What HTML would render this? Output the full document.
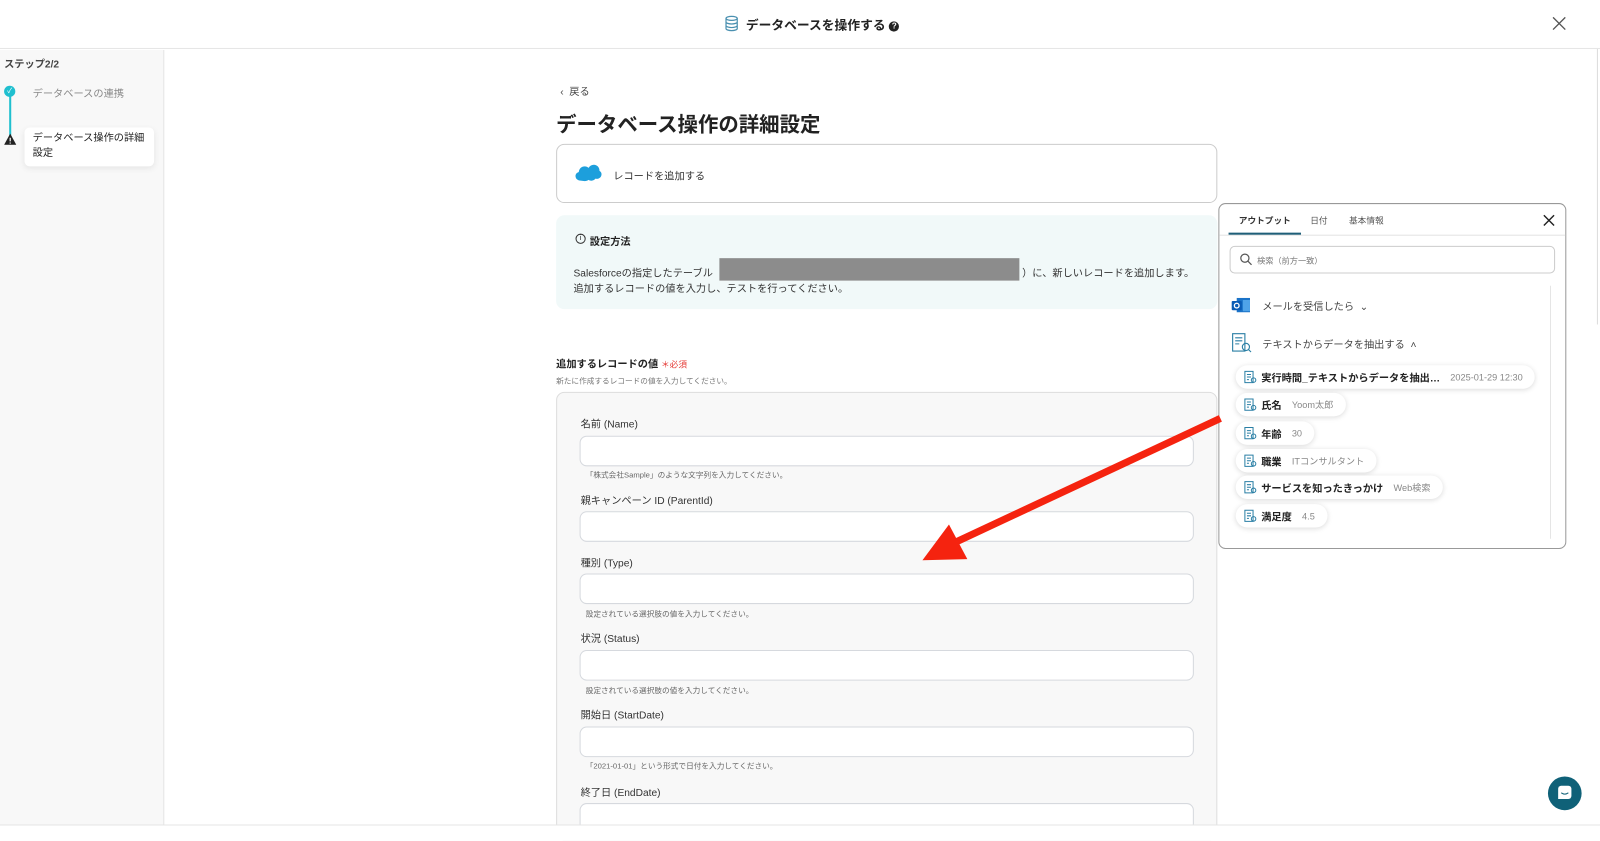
<!DOCTYPE html>
<html><head><meta charset="utf-8"><style>
*{box-sizing:border-box;margin:0;padding:0}
body{width:1600px;height:824px;overflow:hidden;background:#fff;font-family:"Liberation Sans","Noto Sans CJK JP",sans-serif;color:#222;position:relative}
#w{position:absolute;left:0;top:0;width:1568px;height:808px;transform:scale(1.0204);transform-origin:0 0}
.a{position:absolute;white-space:nowrap}
.inp{position:absolute;left:568px;width:602px;height:30px;background:#fff;border:1px solid #d6d9de;border-radius:7px}
.lab{position:absolute;left:569px;font-size:10px;color:#333}
.hlp{position:absolute;left:574px;font-size:7.5px;color:#666}
.chip{position:absolute;left:1211px;height:23px;background:#fff;border-radius:12px;box-shadow:0 1px 5px rgba(0,0,0,.15);font-size:10px;font-weight:bold;display:flex;align-items:center;padding:0 12px 0 8px;white-space:nowrap}
.chip i{font-style:normal;font-weight:normal;color:#888;font-size:9px;margin-left:10px}
.chip svg{margin-right:4px}
</style></head><body><div id="w">
<div class="a" style="left:0;top:0;width:1568px;height:48px;border-bottom:1px solid #e5e5e5"></div>
<svg class="a" style="left:710px;top:15px" width="14" height="16" viewBox="0 0 14 16"><g fill="none" stroke="#4a90b0" stroke-width="1.2"><ellipse cx="7" cy="3" rx="5.5" ry="2"/><path d="M1.5 3v10c0 1.1 2.5 2 5.5 2s5.5-.9 5.5-2V3M1.5 6.5c0 1.1 2.5 2 5.5 2s5.5-.9 5.5-2M1.5 10c0 1.1 2.5 2 5.5 2s5.5-.9 5.5-2"/></g></svg>
<div class="a" style="left:731px;top:14px;font-size:12.5px;font-weight:bold">データベースを操作する <span style="display:inline-block;width:10px;height:10px;border-radius:50%;background:#222;color:#fff;font-size:8px;text-align:center;line-height:10px;vertical-align:1px">?</span></div>
<svg class="a" style="left:1521px;top:16px" width="14" height="14"><path d="M1 1L13 13M13 1L1 13" stroke="#555" stroke-width="1.3"/></svg>
<div class="a" style="left:0;top:49px;width:161px;height:760px;background:#f8f8f8;border-right:1px solid #e5e5e5"></div>
<div class="a" style="left:4px;top:54px;font-size:10px;font-weight:bold;color:#444">ステップ2/2</div>
<div class="a" style="left:9px;top:90px;width:2px;height:46px;background:#1fbfcf"></div>
<div class="a" style="left:4px;top:84px;width:11px;height:11px;border-radius:50%;background:#1fbfcf;color:#fff;font-size:7px;text-align:center;line-height:11px">✓</div>
<div class="a" style="left:32px;top:83px;font-size:10px;color:#888">データベースの連携</div>
<svg class="a" style="left:4px;top:131px" width="12" height="11"><path d="M6 0L12 11H0Z" fill="#222"/><path d="M6 4v3.5M6 8.7v1" stroke="#fff" stroke-width="1.2"/></svg>
<div class="a" style="left:24px;top:125px;width:127px;height:38px;background:#fff;border-radius:5px;box-shadow:0 2px 6px rgba(0,0,0,.08)"></div>
<div class="a" style="left:32px;top:128px;font-size:10px;line-height:15px;color:#222">データベース操作の詳細<br>設定</div>
<div class="a" style="left:549px;top:81px;font-size:10px;color:#444">‹&nbsp; 戻る</div>
<div class="a" style="left:545px;top:106px;font-size:20px;font-weight:bold">データベース操作の詳細設定</div>
<div class="a" style="left:545px;top:141px;width:648px;height:58px;border:1px solid #ccc;border-radius:8px"></div>
<svg class="a" style="left:563px;top:160px" width="27" height="19"><path d="M6 17c-3 0-5-2-5-4.5 0-2 1.5-3.5 3.2-3.8C4.5 5 7 3 10 3c1.5 0 2.8.6 3.8 1.5C15 2.5 17 1.5 19 1.5c3 0 5.5 2.5 5.5 5.5v.5c1.300.6 2 1.8 2 3.3 0 2.5-2 4.5-4.5 4.5-.5 0-1 0-1.400-.2-1 1.3-2.5 2-4 2-1 0-2-.3-2.800-.8C12.900 17 11.500 17.500 10 17.500z" fill="#1d9fdc"/></svg>
<div class="a" style="left:601px;top:164px;font-size:10px;color:#333">レコードを追加する</div>
<div class="a" style="left:545px;top:211px;width:648px;height:92px;background:#f1f9f9;border-radius:8px"></div>
<div class="a" style="left:564px;top:229px;width:10px;height:10px;border:1px solid #333;border-radius:50%;font-size:7px;text-align:center;line-height:8px">i</div>
<div class="a" style="left:578px;top:228px;font-size:10px;font-weight:bold">設定方法</div>
<div class="a" style="left:562px;top:259px;font-size:10px;color:#333">Salesforceの指定したテーブル（<span style="display:inline-block;width:293px"></span>）に、新しいレコードを追加します。</div>
<div class="a" style="left:705px;top:253px;width:294px;height:22px;background:#8c8c8c"></div>
<div class="a" style="left:562px;top:274px;font-size:10px;color:#333">追加するレコードの値を入力し、テストを行ってください。</div>
<div class="a" style="left:545px;top:348px;font-size:10px;font-weight:bold">追加するレコードの値 <span style="color:#e53935;font-weight:normal;font-size:8.5px">＊必須</span></div>
<div class="a" style="left:545px;top:368px;font-size:7.5px;color:#777">新たに作成するレコードの値を入力してください。</div>
<div class="a" style="left:545px;top:384px;width:648px;height:440px;background:#f8f8f8;border:1px solid #ddd;border-radius:8px"></div>
<div class="lab" style="top:407px">名前 (Name)</div><div class="inp" style="top:427px"></div>
<div class="hlp" style="top:460px">「株式会社Sample」のような文字列を入力してください。</div>
<div class="lab" style="top:482px">親キャンペーン ID (ParentId)</div><div class="inp" style="top:501px"></div>
<div class="lab" style="top:543px">種別 (Type)</div><div class="inp" style="top:562px"></div>
<div class="hlp" style="top:596px">設定されている選択肢の値を入力してください。</div>
<div class="lab" style="top:617px">状況 (Status)</div><div class="inp" style="top:637px"></div>
<div class="hlp" style="top:671px">設定されている選択肢の値を入力してください。</div>
<div class="lab" style="top:692px">開始日 (StartDate)</div><div class="inp" style="top:712px"></div>
<div class="hlp" style="top:745px">「2021-01-01」という形式で日付を入力してください。</div>
<div class="lab" style="top:768px">終了日 (EndDate)</div><div class="inp" style="top:787px"></div>
<div class="a" style="left:0;top:808px;width:1568px;height:16px;background:#fff;border-top:1px solid #e5e5e5"></div>
<div class="a" style="left:1565px;top:48px;width:1px;height:270px;background:#ddd"></div>
<div class="a" style="left:1194px;top:199px;width:341px;height:339px;background:#fff;border:1px solid #999;border-radius:7px"></div>
<div class="a" style="left:1214px;top:210px;font-size:8.5px;font-weight:bold;color:#333">アウトプット</div>
<div class="a" style="left:1284px;top:210px;font-size:8.5px;color:#555">日付</div>
<div class="a" style="left:1322px;top:210px;font-size:8.5px;color:#555">基本情報</div>
<div class="a" style="left:1195px;top:230px;width:339px;height:1px;background:#e3e3e3"></div>
<div class="a" style="left:1204px;top:228px;width:71px;height:2px;background:#1f5f78"></div>
<svg class="a" style="left:1512px;top:210px" width="12" height="12"><path d="M1 1L11 11M11 1L1 11" stroke="#222" stroke-width="1.4"/></svg>
<div class="a" style="left:1205px;top:241px;width:319px;height:27px;border:1px solid #ccc;border-radius:5px"></div>
<svg class="a" style="left:1215px;top:248px" width="12" height="12"><circle cx="5" cy="5" r="4" fill="none" stroke="#555" stroke-width="1.2"/><path d="M8 8l3.5 3.5" stroke="#555" stroke-width="1.2"/></svg>
<div class="a" style="left:1232px;top:250px;font-size:8px;color:#777">検索（前方一致）</div>
<div class="a" style="left:1519px;top:280px;width:1px;height:248px;background:#e5e5e5"></div>
<svg class="a" style="left:1207px;top:291px" width="19" height="16"><rect x="5" y="1" width="13" height="14" fill="#1a73c8"/><rect x="11" y="3" width="7" height="11" fill="#4fa3e8"/><rect x="0" y="4" width="10" height="9" rx="1" fill="#0a5cb5"/><circle cx="5" cy="8.5" r="2.3" fill="none" stroke="#fff" stroke-width="1.3"/></svg>
<div class="a" style="left:1237px;top:292px;font-size:10px;color:#444">メールを受信したら&nbsp; ⌄</div>
<svg class="a" style="left:1207px;top:326px" width="20" height="20"><g fill="none" stroke="#2a7fa5" stroke-width="1.1"><path d="M1 1h12v17H1z"/><path d="M3.5 5h7M3.5 8h7M3.5 11h4"/><circle cx="14" cy="14" r="3.5"/><path d="M16.5 16.5l2.5 2.5"/></g></svg>
<div class="a" style="left:1237px;top:329px;font-size:10px;color:#444">テキストからデータを抽出する&nbsp; ˄</div>
<svg width="0" height="0" style="position:absolute"><defs><g id="di"><g fill="none" stroke="#2a7fa5" stroke-width="1"><path d="M1 1h8v11H1z"/><path d="M3 4h4M3 6.5h4M3 9h2"/><circle cx="9.5" cy="9.5" r="2.2"/></g></g></defs></svg>
<div class="chip" style="top:358px"><svg width="13" height="13"><use href="#di"/></svg>実行時間_テキストからデータを抽出…<i>2025-01-29 12:30</i></div>
<div class="chip" style="top:385px"><svg width="13" height="13"><use href="#di"/></svg>氏名<i>Yoom太郎</i></div>
<div class="chip" style="top:413px"><svg width="13" height="13"><use href="#di"/></svg>年齢<i>30</i></div>
<div class="chip" style="top:440px"><svg width="13" height="13"><use href="#di"/></svg>職業<i>ITコンサルタント</i></div>
<div class="chip" style="top:466px"><svg width="13" height="13"><use href="#di"/></svg>サービスを知ったきっかけ<i>Web検索</i></div>
<div class="chip" style="top:494px"><svg width="13" height="13"><use href="#di"/></svg>満足度<i>4.5</i></div>
<svg class="a" style="left:0;top:0" width="1568" height="808"><path d="M1196 410L935 532" stroke="#f5230f" stroke-width="7"/><path d="M904 549L930 514L948 548Z" fill="#f5230f"/></svg>
<div class="a" style="left:1517px;top:761px;width:33px;height:33px;border-radius:50%;background:#0f6178"></div>
<div class="a" style="left:1527px;top:770px;width:13px;height:13px;background:#fff;border-radius:3px 3px 3px 0"></div>
<svg class="a" style="left:1529px;top:776px" width="9" height="4"><path d="M1 1q3.5 2.500 7 0" fill="none" stroke="#0f6178" stroke-width="1"/></svg>
</div></body></html>
